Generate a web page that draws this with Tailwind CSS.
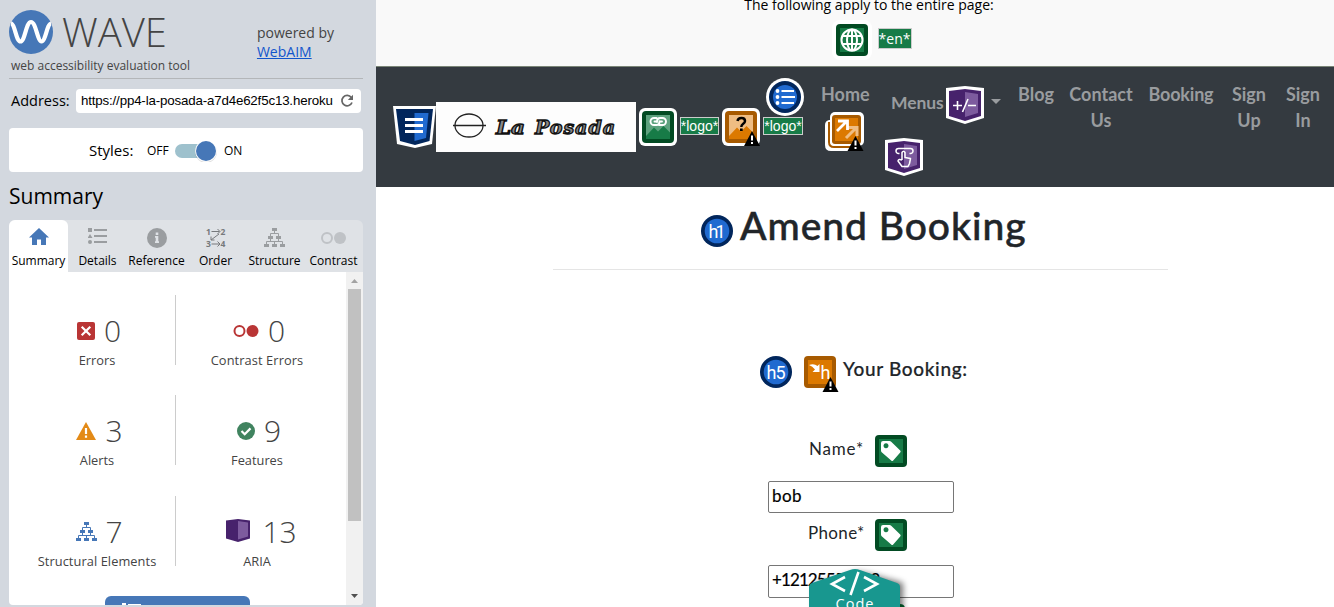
<!DOCTYPE html>
<html lang="en">
<head>
<meta charset="utf-8">
<title>WAVE report</title>
<script src="https://cdn.jsdelivr.net/npm/@tailwindcss/browser@4"></script>
</head>
<body class="flex h-[607px] w-[1334px] overflow-hidden bg-white font-['Open_Sans',sans-serif]">
<svg class="hidden">
  <symbol id="tree" viewBox="0 0 21 19"><path fill="currentColor" d="M8 0h5v3H8zM4 8h5v3H4zM12 8h5v3h-5zM0 16h5v3H0zM8 16h5v3H8zM16 16h5v3h-5z"/><path fill="none" stroke="currentColor" d="M10.5 3v2.5M6.500 8V5.500h8V8M6.500 11v2.500M14.500 11v2.500M2.500 16v-2.500h16V16M10.500 13.500V16"/></symbol>
  <symbol id="alert" viewBox="0 0 16 15"><path fill="#000" d="M8 0 16 15H0z"/><path stroke="#fff" stroke-width="2" d="M8 4.500v5M8 11v2"/></symbol>
  <symbol id="tag" viewBox="0 0 32 32"><rect width="32" height="32" rx="4" fill="#024b23"/><rect x="4" y="4" width="24" height="24" fill="#177b47"/><path fill="#fff" fill-rule="evenodd" d="M8 6h6.500q1 0 1.700.7l9 8.800q1 1 0 2l-7 8q-1 1-2 0l-9.500-8.200q-.7-.7-.7-1.800V8q0-2 2-2zm3 2.300a2.500 2.500 0 1 0 .01 0z"/></symbol>
  <symbol id="picture" viewBox="0 0 38 38"><rect width="38" height="38" rx="6" fill="#fff"/><rect x="3" y="3" width="32" height="32" rx="4" fill="var(--edge)"/><rect x="7" y="7" width="24" height="24" fill="var(--pale)"/><path fill="var(--fill)" d="m7 28 8-8.500 4 4L24.500 18l6.500 6.500V31H7z"/></symbol>
</svg>

<aside class="flex h-full w-[376px] shrink-0 flex-col bg-[#d3d8df] pr-[13px] pl-[9px] text-black">
  <header class="flex h-[79px] justify-between border-b border-[#b3b6b9] pt-[10px]">
    <div>
      <div class="flex h-[44px] items-center">
        <svg class="h-[44px] w-[44px]" viewBox="0 0 44 44"><circle cx="22" cy="22" r="22" fill="#4677b7"/><path d="M2 13.500C6 14 7 31.500 11.500 31.500S17 12 22 12s6.500 19.500 10.500 19.500S38 14 42 13.500" fill="none" stroke="#fff" stroke-width="4.200"/></svg>
        <div class="ml-[9px] text-[40px] leading-[44px] font-light text-[#444]">WAVE</div>
      </div>
      <div class="mt-[3px] pl-[2px] text-[12px] leading-[17px] text-[#444]"><span>web accessibility evaluation tool</span></div>
    </div>
    <div class="mt-[13px] mr-[29px] text-[14px] leading-[19px] text-[#444]"><span>powered by</span><br><a class="text-[#1155cc] underline">WebAIM</a></div>
  </header>
  <div class="mt-[10px] flex h-[24px] items-center pl-[2px] text-[14.500px]">
    <span class="w-[65px]">Address:</span>
    <div class="flex h-[24px] w-[285px] items-center rounded bg-white pl-[5px]">
      <div class="w-[252px] overflow-hidden font-['Liberation_Sans',sans-serif] text-[13.333px] tracking-[-0.170px] whitespace-nowrap">https://pp4-la-posada-a7d4e62f5c13.heroku</div>
      <svg class="ml-[7px] h-[14px] w-[14px]" viewBox="0 0 14 14"><path fill="none" stroke="#666" stroke-width="1.700" d="M11.300 3.500A5.200 5.200 0 1 0 12 8.500"/><path fill="#666" d="M13 .8V6H7.800z"/></svg>
    </div>
  </div>
  <div class="mt-[15px] flex h-[44px] items-center rounded bg-white pl-[80px]">
    <span class="w-[58px] text-[15px]">Styles:</span>
    <span class="w-[28px] pt-[2px] text-[12px]">OFF</span>
    <svg class="h-[24px] w-[44px]" viewBox="0 0 44 24"><rect x="0" y="6" width="38" height="14" rx="7" fill="#9ec1cd"/><circle cx="31" cy="14" r="11" fill="#000" opacity=".12"/><circle cx="31" cy="13" r="10.800" fill="#fff"/><circle cx="31" cy="13" r="10" fill="#4677b7"/></svg>
    <span class="ml-[5px] pt-[2px] text-[12px]">ON</span>
  </div>
  <h2 class="mt-[8px] h-[40px] text-[21px] leading-[32px]"><span>Summary</span></h2>
  <nav class="grid h-[52px] shrink-0 grid-cols-6 rounded-t-md bg-[#dfe2e6] text-center text-[12px] leading-[16px] whitespace-nowrap">
    <div class="flex flex-col items-center rounded-t-md bg-white pt-[8px]"><svg class="h-[25px] w-[20px]" viewBox="0 0 20 25"><path fill="#4677b7" d="m10 0 10 9.500h-3V17h-5v-5.500H8V17H3V9.500H0z"/></svg><span>Summary</span></div>
    <div class="flex flex-col items-center pt-[8px]"><svg class="h-[25px] w-[20px]" viewBox="0 0 20 25"><g fill="#9a9da0"><path d="M0 0h4v4H0zM2 6l2.500 4h-5zM6 1h13v2H6zM6 7h13v2H6zM6 13h13v2H6z"/><circle cx="2" cy="14" r="2"/></g></svg><span>Details</span></div>
    <div class="flex flex-col items-center pt-[8px]"><svg class="h-[25px] w-[20px]" viewBox="0 0 20 25"><circle cx="10" cy="10" r="10" fill="#9a9da0"/><path fill="#dfe2e6" d="M8.700 4.500h2.600V7H8.700zM8 8h3.300v5.300H12V15H8v-1.700h.7V9.700H8z"/></svg><span>Reference</span></div>
    <div class="flex flex-col items-center pt-[4px]"><svg class="h-[29px] w-[28px]" viewBox="-4 -4 28 29"><g fill="#76797c" font-family="Open Sans" font-weight="700" font-size="8.500"><text x="0" y="6.500">1</text><text x="14.500" y="6.500">2</text><text x="0" y="19.200">3</text><text x="14.500" y="19.200">4</text></g><path fill="none" stroke="#76797c" d="M5.500 3.500h8M11.500 1l2.500 2.500L11.500 6M5.500 16h8M11.500 13.500 14 16l-2.500 2.500M13 6 5 12M5 8.500V12h3.500"/></svg><span>Order</span></div>
    <div class="flex flex-col items-center pt-[8px] text-[#9a9da0]"><svg class="mb-[6px] h-[19px] w-[21px]"><use href="#tree"/></svg><span class="text-black">Structure</span></div>
    <div class="flex flex-col items-center pt-[8px]"><svg class="h-[25px] w-[26px]" viewBox="1 0 26 25"><circle cx="7" cy="10" r="5" fill="none" stroke="#bfc2c6" stroke-width="2"/><circle cx="20" cy="10" r="6" fill="#bfc2c6"/></svg><span>Contrast</span></div>
  </nav>
  <section class="flex h-[333px] shrink-0 overflow-hidden rounded-b bg-white text-[#444]">
    <div class="w-[337px] pl-[10px]">
      <div class="mt-[23px] grid h-[70px] grid-cols-[157px_160px] grid-rows-[70px] text-center">
        <div class="border-r border-[#ccc] pt-[18px]"><div class="flex h-[35px] items-center justify-center gap-[9px] pl-[4px] text-[30px] font-light"><svg class="h-[18px] w-[18px]" viewBox="0 0 18 18"><rect width="18" height="18" rx="2" fill="#b93535"/><path stroke="#fff" stroke-width="2.200" d="m4.700 4.700 8.600 8.600m0-8.600-8.600 8.600"/></svg><span>0</span></div><div class="mt-[4px] text-[12.800px] leading-[17px]"><span>Errors</span></div></div>
        <div class="pt-[18px]"><div class="flex h-[35px] items-center justify-center gap-[9px] pl-[6px] text-[30px] font-light"><svg class="h-[14px] w-[26px]" viewBox="0 0 26 14"><circle cx="6.500" cy="7" r="5" fill="none" stroke="#b93535" stroke-width="2"/><circle cx="19.500" cy="7" r="6" fill="#b93535"/></svg><span>0</span></div><div class="mt-[4px] pl-[2px] text-[12.800px] leading-[17px] tracking-[0.100px]"><span>Contrast Errors</span></div></div>
      </div>
      <div class="mt-[30px] grid h-[70px] grid-cols-[157px_160px] grid-rows-[70px] text-center">
        <div class="border-r border-[#ccc] pt-[18px]"><div class="flex h-[35px] items-center justify-center gap-[9px] pl-[5px] text-[30px] font-light"><svg class="h-[18px] w-[20px]" viewBox="0 0 20 18"><path fill="#e38a17" d="m10 0 10 18H0z"/><path stroke="#fff" stroke-width="2.200" d="M10 6v6M10 13.500v2.200"/></svg><span>3</span></div><div class="mt-[4px] text-[12.800px] leading-[17px]"><span>Alerts</span></div></div>
        <div class="pt-[18px]"><div class="flex h-[35px] items-center justify-center gap-[9px] pl-[6px] text-[30px] font-light"><svg class="h-[18px] w-[18px]" viewBox="0 0 18 18"><circle cx="9" cy="9" r="9" fill="#40835f"/><path fill="none" stroke="#fff" stroke-width="2.200" d="m4.500 9 3.200 3.200 5.800-5.800"/></svg><span>9</span></div><div class="mt-[4px] pl-[2px] text-[12.800px] leading-[17px]"><span>Features</span></div></div>
      </div>
      <div class="mt-[31px] grid h-[70px] grid-cols-[157px_160px] grid-rows-[70px] text-center">
        <div class="border-r border-[#ccc] pt-[18px]"><div class="flex h-[35px] items-center justify-center gap-[8px] pl-[5px] text-[30px] font-light"><svg class="h-[19px] w-[21px] text-[#4677b7]"><use href="#tree"/></svg><span>7</span></div><div class="mt-[4px] text-[12.800px] leading-[17px] tracking-[0.080px]"><span>Structural Elements</span></div></div>
        <div class="pt-[18px]"><div class="flex h-[35px] items-center justify-center gap-[12px] pl-[11px] text-[30px] font-light"><svg class="-mt-[3px] h-[23px] w-[24px]" viewBox="0 0 24 23"><path fill="#47226c" d="M0 1.500 12 0l12 1.500v18L12 23 0 19.500z"/><path fill="#7d5b9e" d="m12 2 10 1.500v14L12 20.500z"/></svg><span>13</span></div><div class="mt-[4px] pl-[2px] text-[12.800px] leading-[17px]"><span>ARIA</span></div></div>
      </div>
      <div class="mt-[30px] ml-[86px] h-[30px] w-[145px] rounded-md bg-[#4677b7] pt-[7px] pl-[17px]"><svg class="h-[12px] w-[24px]" viewBox="0 0 24 12"><path fill="#fff" d="M0 0h4v4H0zM6 1h13v2H6z"/></svg></div>
    </div>
    <div class="flex w-[17px] flex-col items-center bg-[#f1f1f1]">
      <svg class="h-[17px] w-[17px]" viewBox="0 0 17 17"><path fill="#a3a3a3" d="m8.500 7 3.500 4H5z"/></svg>
      <div class="h-[232px] w-[13px] bg-[#c1c1c1]"></div>
      <svg class="mt-auto h-[17px] w-[17px]" viewBox="0 0 17 17"><path fill="#505050" d="M5 6h7l-3.500 4z"/></svg>
    </div>
  </section>
</aside>

<main class="relative flex w-[958px] flex-col font-['Lato',sans-serif]">
  <div class="flex h-[67px] shrink-0 flex-col items-center border-b border-[#7a8577] bg-[#f9f9f9] pl-[28px] font-['Open_Sans',sans-serif] text-[14px]">
    <div class="-mt-[5px] h-[25px] leading-[20px] text-black"><span>The following apply to the entire page:</span></div>
    <div class="ml-[5px] flex items-start">
      <div class="h-[40px] w-[40px] rounded-lg bg-white p-[4px]"><svg class="h-[32px] w-[32px]" viewBox="0 0 32 32"><rect width="32" height="32" rx="4" fill="#024b23"/><rect x="4" y="4" width="24" height="24" fill="#177b47"/><g fill="none" stroke="#fff" stroke-width="2"><circle cx="16" cy="16" r="10.500"/><ellipse cx="16" cy="16" rx="5" ry="10.500"/><path d="M16 5v22M6.500 12h19M6.500 20h19"/></g></svg></div>
      <span class="mt-[8px] ml-[6px] flex h-[21px] w-[34px] items-center justify-center border border-[#ccc] bg-[#177b47] text-[14px] text-white">*en*</span>
    </div>
  </div>
  <nav class="flex h-[120px] shrink-0 items-start bg-[#343a40] pl-[17px] text-[18px] leading-[26px] font-bold text-[#999c9f]">
    <svg class="mt-[39px] h-[42px] w-[43px]" viewBox="0 0 43 42"><path fill="#fff" d="M0 0h43l-4 38-17 4-18-4z"/><path fill="#01265c" d="M3 3h37l-3.500 32L22 39 7 35z"/><path fill="#206ad0" d="M21.500 7h14L33 32l-11.500 3z"/><path stroke="#fff" stroke-width="3" d="M12 13.500h18M12 19.500h18M12 25.500h18"/></svg>
    <svg class="mt-[35px] h-[50px] w-[200px] bg-[#fdfdfd]" viewBox="0 0 200 50"><g fill="none" stroke="#222" stroke-width="1.300"><ellipse cx="33" cy="23.500" rx="14" ry="11.500"/><path d="M17 23.500h33"/></g><g font-family="DejaVu Serif" font-style="italic" font-weight="700" font-size="19" fill="#888" stroke="#111" stroke-width="1.300"><text x="60" y="31.500" textLength="29" lengthAdjust="spacingAndGlyphs">La</text><text x="99" y="31.500" textLength="80" lengthAdjust="spacing">Posada</text></g></svg>
    <svg class="mt-[41px] ml-[3px] h-[38px] w-[38px] [--edge:#024b23] [--fill:#177b47] [--pale:#5da27e]" viewBox="0 0 38 38"><use href="#picture"/><path fill="none" stroke="#fff" stroke-width="1.900" stroke-linecap="round" d="M17.500 10H15a3.500 3.500 0 0 0 0 7h2.500q3 0 3-3.500v-.3M15.500 13.500h2M20 17h3.500a3.500 3.500 0 0 0 0-7h-2.200q-3.300 0-3.300 3.500v.5M21 13.500h2"/></svg>
    <span class="mt-[50px] ml-[3px] flex h-[18px] w-[39px] items-center justify-center border border-[#ccc] bg-[#177b47] font-['Liberation_Sans',sans-serif] text-[14px] font-normal text-white">*logo*</span>
    <svg class="mt-[41px] ml-[3px] h-[38px] w-[38px] [--edge:#a75a00] [--fill:#dc7900] [--pale:#efbd83]" viewBox="0 0 38 38"><use href="#picture"/><path fill="none" stroke="#000" stroke-width="2.500" d="M15.500 13q.5-3 4-3t3.500 3q0 1.500-1.800 2.800-1.900 1.400-1.900 3.200"/><path d="M18 20.500h2.700V23H18z"/><use href="#alert" x="22" y="23" width="16" height="15"/></svg>
    <div class="ml-[3px] flex w-[41px] flex-col pt-[11px]">
      <svg class="ml-[3px] h-[38px] w-[38px]" viewBox="0 0 38 38"><circle cx="19" cy="19" r="19" fill="#fff"/><circle cx="19" cy="19" r="16" fill="#01265c"/><circle cx="19" cy="19" r="12" fill="#206ad0"/><path stroke="#fff" stroke-width="2" d="M15.500 13H28M15.500 19H29M15.500 25H28"/><g fill="#fff"><circle cx="11.500" cy="13" r="1.900"/><circle cx="11.500" cy="19" r="1.900"/><circle cx="11.500" cy="25" r="1.900"/></g></svg>
      <span class="mt-[1px] flex h-[18px] w-[40px] items-center justify-center border border-[#ccc] bg-[#177b47] font-['Liberation_Sans',sans-serif] text-[14px] font-normal text-white">*logo*</span>
    </div>
    <div class="ml-[17px] flex flex-col pt-[14px]"><div class="w-[49px]"><span>Home</span></div>
      <svg class="mt-[5px] ml-[4px] h-[39px] w-[40px]" viewBox="0 0 40 39"><path fill="#fff" d="M5 8H4q-4 1-4 5v20q0 6 6 6h22q4 0 5-5L9 5z"/><path fill="none" stroke="#a75a00" stroke-width="2" d="M4 10v20q0 5 5 5h20"/><rect x="5" width="34" height="34" rx="5" fill="#fff"/><rect x="7" y="3" width="29" height="29" rx="3" fill="#a75a00"/><rect x="10" y="6" width="23" height="23" fill="#dc7900"/><path fill="none" stroke="#efbd83" stroke-width="3" d="m21 26 10-10M23 15.500h9V24"/><path fill="none" stroke="#fff" stroke-width="2.800" d="m12 19 10-10M13 9h9.500v9"/><use href="#alert" x="22" y="24" width="17" height="15"/></svg>
    </div>
    <div class="ml-[15px] flex flex-col pt-[19px]">
      <div class="flex items-center"><span class="-mt-[5px] ml-[6px] w-[55px] text-[17.500px] tracking-[-0.100px]"><span>Menus</span></span>
        <svg class="h-[38px] w-[38px]" viewBox="0 0 38 38"><path fill="#fff" d="m0 2 19-2 19 2v30l-19 6-19-6z"/><path fill="#47226c" d="m3 5 16-2 16 2v25l-16 5-16-5z"/><path fill="#7d5b9e" d="m19 6 13 2v19l-13 4z"/><path fill="none" stroke="#fff" stroke-width="1.600" d="M7 19.500h9M11.500 15v9M22 13l-5.500 13M22 19.500h8"/></svg>
        <svg class="-mt-[7px] ml-[7px] h-[5px] w-[10px]" viewBox="0 0 10 5"><path fill="#999c9f" d="M0 0h10L5 5z"/></svg></div>
      <svg class="mt-[14px] h-[38px] w-[38px]" viewBox="0 0 38 38"><path fill="#fff" d="m0 2 19-2 19 2v30l-19 6-19-6z"/><path fill="#47226c" d="m3 5 16-2 16 2v25l-16 5-16-5z"/><path fill="#7d5b9e" d="m19 6 13 2v19l-13 4z"/><path fill="none" stroke="#fff" stroke-width="1.500" stroke-linejoin="round" d="M14.500 15.500h-1a2.500 2.500 0 0 1 0-5h12a2.500 2.500 0 0 1 0 5h-1M17 22v-7.500q1.500-2.500 3 0v5l5.500 1-1 5-1.500 3h-6l-4-5.500q.5-2.500 4-1"/></svg>
    </div>
    <div class="ml-[17px] w-[35px] pt-[14px] text-center"><span>Blog</span></div>
    <div class="ml-[16px] w-[64px] pt-[14px] text-center"><span>Contact</span><br>Us</div>
    <div class="ml-[15px] w-[66px] pt-[14px] text-center"><span class="tracking-[-0.200px]">Booking</span></div>
    <div class="ml-[17px] w-[36px] pt-[14px] text-center"><span>Sign</span><br>Up</div>
    <div class="ml-[18px] w-[36px] pt-[14px] text-center"><span>Sign</span><br>In</div>
  </nav>
  <div class="ml-[177px] flex h-[83px] w-[615px] items-start border-b border-[#e5e5e5] pl-[148px]">
    <svg class="mt-[28px] h-[32px] w-[32px]" viewBox="0 0 32 32"><circle cx="16" cy="16" r="16" fill="#01265c"/><circle cx="16" cy="16" r="12.300" fill="#206ad0"/><text x="16" y="22.500" text-anchor="middle" textLength="17" font-family="Roboto" font-size="18" fill="#fff">h1</text></svg>
    <h1 class="mt-[13px] ml-[7px] text-[39px] leading-[50px] font-medium tracking-[0.950px] whitespace-nowrap text-[#212529] [-webkit-text-stroke:0.5px_#212529]"><span>Amend Booking</span></h1>
  </div>
  <div class="mt-[86px] ml-[384px] flex items-start">
    <svg class="h-[32px] w-[32px]" viewBox="0 0 32 32"><circle cx="16" cy="16" r="16" fill="#01265c"/><circle cx="16" cy="16" r="12.300" fill="#206ad0"/><text x="16" y="22.500" text-anchor="middle" textLength="19" font-family="Roboto" font-size="18" fill="#fff">h5</text></svg>
    <svg class="ml-[12px] h-[36px] w-[35px]" viewBox="0 0 35 36"><rect width="32" height="32" rx="4" fill="#a75a00"/><rect x="4" y="4" width="24" height="24" fill="#dc7900"/><path fill="#fff" d="M5 9q5-2 8.500 1l2-2V16H8.500L11 13.500Q8.500 10 5 9z"/><text x="16.500" y="23" font-family="Roboto" font-size="18" fill="#fff">h</text><use href="#alert" x="18" y="21" width="17" height="15"/></svg>
    <span class="mt-[1px] ml-[4px] text-[19px] leading-[24px] font-medium tracking-[0.650px] whitespace-nowrap text-[#212529] [-webkit-text-stroke:0.2px_#212529]"><span>Your Booking:</span></span>
  </div>
  <div class="mt-[43px] ml-[392px] flex h-[46px] items-start pl-[41px] text-[#212529]">
    <span class="w-[66px] text-[17px] leading-[27px] tracking-[0.800px]"><span>Name*</span></span>
    <svg class="h-[32px] w-[32px]"><use href="#tag"/></svg>
  </div>
  <div class="ml-[392px] h-[32px] w-[186px] rounded-[2px] border border-[#767676] px-[3px] text-[17px] leading-[27px] tracking-[0.400px] text-black [-webkit-text-stroke:0.2px_#000]"><span>bob</span></div>
  <div class="mt-[6px] ml-[392px] flex h-[46px] items-start pl-[40px] text-[#212529]">
    <span class="w-[67px] text-[17px] leading-[27px] tracking-[0.350px]"><span>Phone*</span></span>
    <svg class="h-[32px] w-[32px]"><use href="#tag"/></svg>
  </div>
  <div class="ml-[392px] h-[33px] w-[186px] rounded-[2px] border border-[#767676] px-[3px] text-[17px] leading-[28px] tracking-[-0.900px] text-black [-webkit-text-stroke:0.2px_#000]"><span>+12125552368</span></div>
  <svg class="absolute top-[567px] left-[423px] h-[40px] w-[120px]" viewBox="0 0 120 40"><defs><filter id="soft" x="-20%" y="-20%" width="150%" height="150%"><feGaussianBlur stdDeviation="3"/></filter></defs><path d="M15 17 60 5q4 0 44 11v40H15z" fill="#000" opacity=".55" filter="url(#soft)"/><path fill="#024b23" d="M90 37h11q5 0 5 5H90z"/><path d="M10 20q0-3 3-4L51 3q5-2 10 0l37 13q3 1 3 4v30H10z" fill="#18978f"/><path fill="none" stroke="#fff" stroke-width="2.600" d="m46 10-13 7 13 7M65 10l13 7-13 7M59.500 5l-8 23"/><text x="55.500" y="42" text-anchor="middle" textLength="38" font-family="Open Sans" font-size="14.500" fill="#fff">Code</text></svg>
</main>
</body>
</html>
